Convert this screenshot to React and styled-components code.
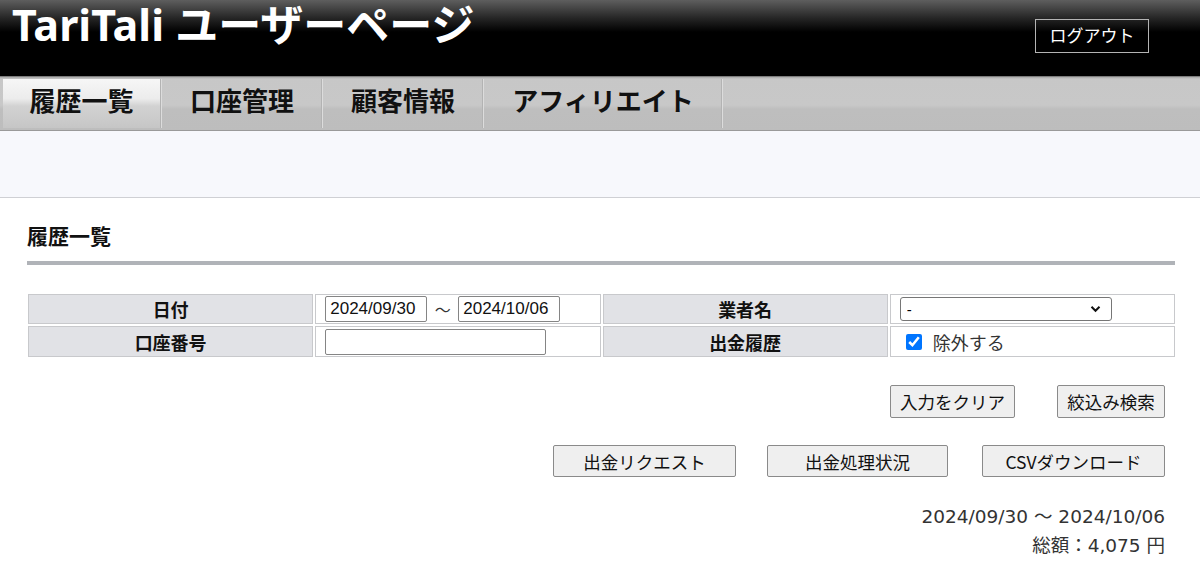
import React from 'react';
import styled, { createGlobalStyle } from 'styled-components';

const Global = createGlobalStyle`
  html, body { margin: 0; padding: 0; background: #fff; }
  body {
    font-family: "Liberation Sans", "Noto Sans CJK JP", sans-serif;
    color: #000;
  }
  * { box-sizing: border-box; }
`;

const Header = styled.header`
  height: 77px;
  background: linear-gradient(to bottom, #5e5e5e 0px, #262626 18px, #000 32px, #000 100%);
  border-bottom: 1px solid #7d7d7d;
  display: flex;
  justify-content: space-between;
  align-items: flex-start;
  padding: 0 51px 0 12px;
`;

const Title = styled.h1`
  margin: 0;
  font-family: "Noto Sans", "Noto Sans CJK JP", sans-serif;
  font-weight: 700;
  font-size: 43px;
  line-height: 50px;
  color: #fff;
  white-space: nowrap;
`;

const LogoutButton = styled.button`
  margin-top: 19px;
  width: 114px;
  height: 34px;
  background: transparent;
  border: 1px solid #b4b4b4;
  color: #fff;
  font-family: "Noto Sans CJK JP", sans-serif;
  font-size: 17px;
  padding: 0 0 3px;
  cursor: pointer;
`;

const Nav = styled.nav`
  height: 54px;
  display: flex;
  align-items: stretch;
  padding: 2px 0 2px 3px;
  background: linear-gradient(to bottom, #a9a9a9 0px, #c7c7c7 2px, #c8c8c8 28px, #bebebe 32px, #bdbdbd 100%);
  border-bottom: 1px solid #9a9a9a;
`;

const Tab = styled.a`
  width: ${(p) => p.$w}px;
  display: flex;
  align-items: center;
  justify-content: center;
  padding-bottom: 8px;
  font-family: "Noto Sans CJK JP", sans-serif;
  font-weight: 700;
  font-size: 26px;
  color: #111;
  text-decoration: none;
  border-right: 1px solid #b3b3b3;
  box-shadow: 1px 0 0 #dcdcdc;
  margin-right: 2px;
  background: ${(p) =>
    p.$active
      ? 'linear-gradient(to bottom, #f6f6f6 0%, #ececec 40%, #d2d2d2 55%, #c6c6c6 100%)'
      : 'transparent'};
`;

const Band = styled.div`
  height: 67px;
  background: #f7f8fc;
  border-bottom: 1px solid #cfd0d4;
`;

const Main = styled.main`
  padding: 27px 25px 0 27px;
`;

const Heading = styled.h2`
  margin: 0;
  font-family: "Liberation Sans", "Noto Sans CJK JP", sans-serif;
  font-size: 21px;
  line-height: 24px;
  font-weight: 700;
  color: #111;
`;

const Rule = styled.div`
  margin-top: 12px;
  height: 4px;
  background: #b0b3b8;
`;

const Grid = styled.div`
  margin: 29px 0 0 1px;
  display: grid;
  grid-template-columns: repeat(4, 1fr);
  grid-template-rows: 30px 31px;
  gap: 2px;
`;

const Label = styled.div`
  border: 1px solid #c8c9cc;
  background: #e1e2e6;
  display: flex;
  align-items: center;
  justify-content: center;
  font-size: 18px;
  font-weight: 700;
  color: #111;
`;

const Value = styled.div`
  border: 1px solid #c8c9cc;
  background: #fff;
  display: flex;
  align-items: center;
  padding-left: 9px;
  font-size: 17px;
`;

const TextInput = styled.input`
  width: ${(p) => p.$w}px;
  height: 26px;
  border: 1px solid #858585;
  border-radius: 2px;
  padding: 0 4px;
  font-family: "Liberation Sans", sans-serif;
  font-size: 17px;
  color: #111;
  background: #fff;
`;

const Tilde = styled.span`
  width: 31px;
  text-align: center;
  font-family: "Noto Sans CJK JP", sans-serif;
  font-size: 16px;
  color: #333;
`;

const SelectWrap = styled.div`
  position: relative;
  width: 212px;
  height: 24px;
`;

const Select = styled.select`
  appearance: none;
  -webkit-appearance: none;
  width: 100%;
  height: 100%;
  border: 1px solid #767676;
  border-radius: 3px;
  font-family: "Liberation Sans", sans-serif;
  font-size: 15px;
  color: #000;
  background: #fff;
  padding: 0 6px;
`;

const Chevron = styled.svg`
  position: absolute;
  right: 11px;
  top: 8px;
  width: 11px;
  height: 8px;
  pointer-events: none;
`;

const CheckLabel = styled.label`
  display: flex;
  align-items: center;
  gap: 11px;
  padding-left: 6px;
  font-family: "Noto Sans CJK JP", sans-serif;
  font-size: 18px;
  color: #333;
`;

const Check = styled.input`
  width: 16px;
  height: 16px;
  margin: 0;
  accent-color: #0075ff;
`;

const ButtonRow = styled.div`
  margin-top: ${(p) => p.$mt}px;
  display: flex;
  justify-content: flex-end;
  padding-right: 10px;
`;

const Button = styled.button`
  width: ${(p) => p.$w}px;
  height: ${(p) => p.$h}px;
  margin-left: ${(p) => p.$ml || 0}px;
  background: #efefef;
  border: 1px solid #8a8a8a;
  border-radius: 2px;
  font-family: "Noto Sans CJK JP", sans-serif;
  font-size: 17.5px;
  color: #111;
  padding: 0;
  cursor: pointer;
`;

const Summary = styled.div`
  margin-top: 25px;
  padding-right: 10px;
  text-align: right;
  font-family: "DejaVu Sans", "Noto Sans CJK JP", sans-serif;
  font-size: 18.5px;
  line-height: 29px;
  color: #333;
`;

export default function App() {
  return (
    <>
      <Global />
      <Header>
        <Title>TariTali ユーザーページ</Title>
        <LogoutButton>ログアウト</LogoutButton>
      </Header>
      <Nav>
        <Tab $w={158} $active href="#">履歴一覧</Tab>
        <Tab $w={159} href="#">口座管理</Tab>
        <Tab $w={159} href="#">顧客情報</Tab>
        <Tab $w={237} href="#">アフィリエイト</Tab>
      </Nav>
      <Band />
      <Main>
        <Heading>履歴一覧</Heading>
        <Rule />
        <Grid>
          <Label>日付</Label>
          <Value>
            <TextInput $w={102} defaultValue="2024/09/30" />
            <Tilde>～</Tilde>
            <TextInput $w={102} defaultValue="2024/10/06" />
          </Value>
          <Label>業者名</Label>
          <Value>
            <SelectWrap>
              <Select defaultValue="-">
                <option value="-">-</option>
              </Select>
              <Chevron viewBox="0 0 11 8">
                <path d="M1.5 1.8 L5.5 5.8 L9.5 1.8" fill="none" stroke="#111" strokeWidth="2" />
              </Chevron>
            </SelectWrap>
          </Value>
          <Label>口座番号</Label>
          <Value>
            <TextInput $w={221} defaultValue="" />
          </Value>
          <Label>出金履歴</Label>
          <Value>
            <CheckLabel>
              <Check type="checkbox" defaultChecked />
              除外する
            </CheckLabel>
          </Value>
        </Grid>
        <ButtonRow $mt={28}>
          <Button $w={125} $h={33}>入力をクリア</Button>
          <Button $w={108} $h={33} $ml={42}>絞込み検索</Button>
        </ButtonRow>
        <ButtonRow $mt={27}>
          <Button $w={183} $h={32}>出金リクエスト</Button>
          <Button $w={181} $h={32} $ml={31}>出金処理状況</Button>
          <Button $w={183} $h={32} $ml={34}>CSVダウンロード</Button>
        </ButtonRow>
        <Summary>
          <div>2024/09/30 ～ 2024/10/06</div>
          <div>総額：4,075 円</div>
        </Summary>
      </Main>
    </>
  );
}
